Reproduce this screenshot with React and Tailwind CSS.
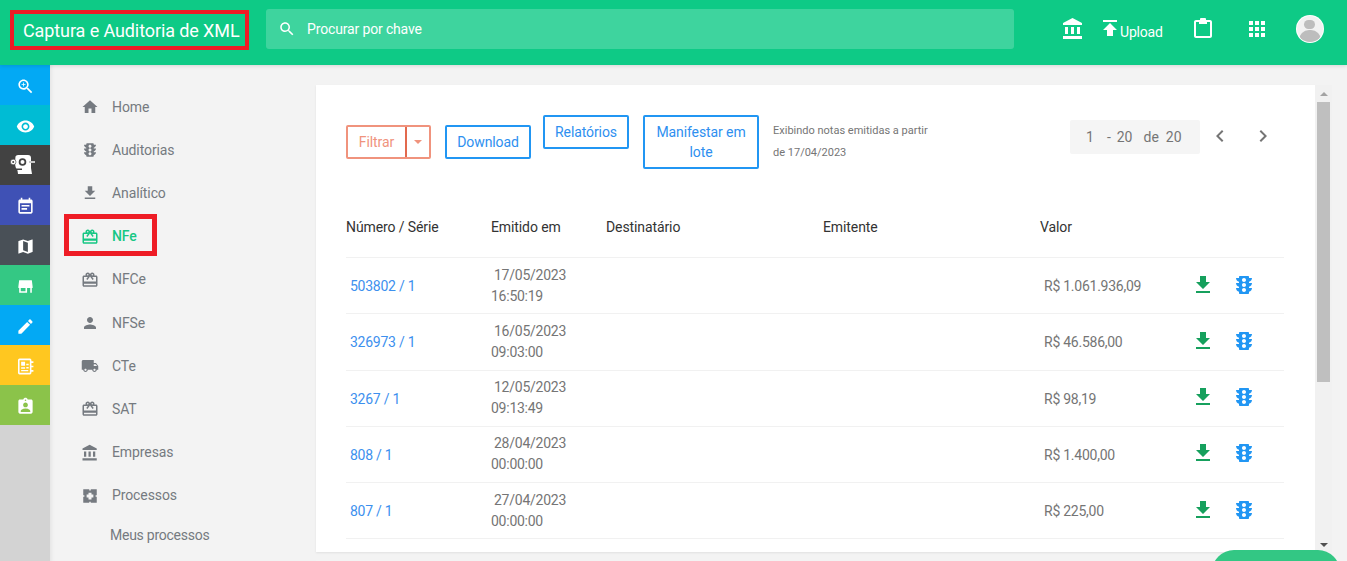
const P = {
  home: "M10 20v-6h4v6h5v-8h3L12 3 2 12h3v8z",
  traffic: "M20 10h-3V8.86c1.72-.45 3-2 3-3.86h-3V4c0-.55-.45-1-1-1H8c-.55 0-1 .45-1 1v1H4c0 1.86 1.28 3.41 3 3.86V10H4c0 1.86 1.28 3.41 3 3.86V15H4c0 1.86 1.28 3.41 3 3.86V20c0 .55.45 1 1 1h8c.55 0 1-.45 1-1v-1.14c1.72-.45 3-2 3-3.86h-3v-1.14c1.72-.45 3-2 3-3.86zm-8 9c-1.11 0-2-.9-2-2s.89-2 2-2c1.1 0 2 .9 2 2s-.89 2-2 2zm0-5c-1.11 0-2-.9-2-2s.89-2 2-2c1.1 0 2 .9 2 2s-.89 2-2 2zm0-5c-1.11 0-2-.9-2-2 0-1.11.89-2 2-2 1.1 0 2 .89 2 2 0 1.1-.89 2-2 2z",
  download: "M19 9h-4V3H9v6H5l7 7 7-7zM5 18v2h14v-2H5z",
  publish: "M5 4v2h14V4H5zm0 10h4v6h6v-6h4l-7-7-7 7z",
  gift: "M20 6h-2.18c.11-.31.18-.65.18-1 0-1.66-1.34-3-3-3-1.05 0-1.96.54-2.5 1.35l-.5.67-.5-.68C10.96 2.54 10.05 2 9 2 7.34 2 6 3.34 6 5c0 .35.07.69.18 1H4c-1.11 0-1.99.89-1.99 2L2 19c0 1.11.89 2 2 2h16c1.11 0 2-.89 2-2V8c0-1.11-.89-2-2-2zm-5-2c.55 0 1 .45 1 1s-.45 1-1 1-1-.45-1-1 .45-1 1-1zM9 4c.55 0 1 .45 1 1s-.45 1-1 1-1-.45-1-1 .45-1 1-1zm11 15H4v-2h16v2zm0-5H4V8h5.08L7 10.83 8.62 12 11 8.76l1-1.36 1 1.36L15.38 12 17 10.83 14.92 8H20v6z",
  person: "M12 12c2.21 0 4-1.79 4-4s-1.79-4-4-4-4 1.79-4 4 1.79 4 4 4zm0 2c-2.67 0-8 1.34-8 4v2h16v-2c0-2.66-5.33-4-8-4z",
  truck: "M20 8h-3V4H3c-1.1 0-2 .9-2 2v11h2c0 1.66 1.34 3 3 3s3-1.34 3-3h6c0 1.66 1.34 3 3 3s3-1.34 3-3h2v-5l-3-4zM6 18.5c-.83 0-1.5-.67-1.5-1.5s.67-1.5 1.5-1.5 1.5.67 1.5 1.5-.67 1.5-1.5 1.5zm13.5-9l1.96 2.5H17V9.5h2.5zm-1.5 9c-.83 0-1.5-.67-1.5-1.5s.67-1.5 1.5-1.5 1.5.67 1.5 1.5-.67 1.5-1.5 1.5z",
  bank: "M4 10v7h3v-7H4zm6 0v7h3v-7h-3zM2 22h19v-3H2v3zm14-12v7h3v-7h-3zm-4.5-9L2 6v2h19V6l-9.5-5z",
  process: "M3 3h8v1.500h2V3h8v8h-1.500v2H21v8h-8v-1.500h-2V21H3v-8h1.500v-2H3zM10 7.500h4V10h2.500v4H14v2.500h-4V14H7.500v-4H10z",
  search: "M15.5 14h-.79l-.28-.27C15.41 12.59 16 11.11 16 9.5 16 5.91 13.09 3 9.5 3S3 5.91 3 9.5 5.91 16 9.5 16c1.61 0 3.09-.59 4.23-1.57l.27.28v.79l5 4.99L20.49 19l-4.99-5zm-6 0C7.01 14 5 11.99 5 9.5S7.01 5 9.5 5 14 7.01 14 9.5 11.99 14 9.5 14z",
  zoom: "M15.5 14h-.79l-.28-.27C15.41 12.59 16 11.11 16 9.5 16 5.91 13.09 3 9.5 3S3 5.91 3 9.5 5.91 16 9.5 16c1.61 0 3.09-.59 4.23-1.57l.27.28v.79l5 4.99L20.49 19l-4.99-5zm-6 0C7.01 14 5 11.99 5 9.5S7.01 5 9.5 5 14 7.01 14 9.5 11.99 14 9.5 14zm2.500-4h-2v2H9v-2H7V9h2V7h1v2h2v1z",
  eye: "M12 4.500C7 4.500 2.730 7.610 1 12c1.730 4.390 6 7.500 11 7.500s9.270-3.110 11-7.500c-1.730-4.390-6-7.500-11-7.500zM12 17c-2.760 0-5-2.240-5-5s2.240-5 5-5 5 2.240 5 5-2.240 5-5 5zm0-8c-1.660 0-3 1.340-3 3s1.340 3 3 3 3-1.340 3-3-1.340-3-3-3z",
  event: "M17 10H7v2h10v-2zm2-7h-1V1h-2v2H8V1H6v2H5c-1.110 0-1.990.9-1.990 2L3 19c0 1.100.89 2 2 2h14c1.100 0 2-.9 2-2V5c0-1.100-.9-2-2-2zm0 16H5V8h14v11zm-5-5H7v2h7v-2z",
  map: "M20.500 3l-.16.03L15 5.100 9 3 3.360 4.900c-.21.07-.36.25-.36.48V20.500c0 .28.22.5.5.5l.16-.03L9 18.900l6 2.100 5.640-1.900c.21-.07.36-.25.36-.48V3.500c0-.28-.22-.5-.5-.5zM15 19l-6-2.110V5l6 2.110V19z",
  store: "M4 4h16l1 8v2h-1v6h-2v-6h-4v6H4v-6H3v-2zM6 14v4h6v-4z",
  edit: "M3 17.250V21h3.750L17.810 9.940l-3.750-3.750L3 17.250zM20.710 7.040c.39-.39.39-1.020 0-1.410l-2.340-2.340c-.39-.39-1.020-.39-1.410 0l-1.830 1.830 3.750 3.750 1.830-1.830z",
  notebook: "M4.500 2h13a2 2 0 0 1 2 2v1.500H22v2h-2.500v3.500H22v2h-2.500V16.500H22v2h-2.500V20a2 2 0 0 1-2 2h-13a2 2 0 0 1-2-2V4a2 2 0 0 1 2-2zm0 2v16h13V4zM6.500 6h5v5h-5zm6.500 2.500h3v2h-3zM6.500 13h5v1.800h-5zm6.500-.500h3v2h-3zM6.500 16.500h9v1.500h-9z",
  badge: "M19 3h-4.180C14.400 1.840 13.300 1 12 1c-1.300 0-2.400.84-2.820 2H5c-1.100 0-2 .9-2 2v14c0 1.100.9 2 2 2h14c1.100 0 2-.9 2-2V5c0-1.100-.9-2-2-2zm-7 0c.55 0 1 .45 1 1s-.45 1-1 1-1-.45-1-1 .45-1 1-1zm0 4c1.660 0 3 1.340 3 3s-1.340 3-3 3-3-1.340-3-3 1.340-3 3-3zm6 12H6v-1.400c0-2 4-3.100 6-3.100s6 1.100 6 3.100V19z",
  clip: "M19 3h-4V2a1 1 0 0 0-1-1h-4a1 1 0 0 0-1 1v1H5c-1.100 0-2 .9-2 2v14c0 1.100.9 2 2 2h14c1.100 0 2-.9 2-2V5c0-1.100-.9-2-2-2zm0 16H5V5h3v2h8V5h3v14z",
  apps: "M4 8h4V4H4v4zm6 12h4v-4h-4v4zm-6 0h4v-4H4v4zm0-6h4v-4H4v4zm6 0h4v-4h-4v4zm6-10v4h4V4h-4zm-6 4h4V4h-4v4zm6 6h4v-4h-4v4zm0 6h4v-4h-4v4z",
  left: "M15.410 7.410L14 6l-6 6 6 6 1.410-1.410L10.830 12z",
  right: "M10 6L8.590 7.410 13.170 12l-4.580 4.590L10 18l6-6z",
};

function Icon({ d, className = "" }) {
  return (
    <svg viewBox="0 0 24 24" fill="currentColor" className={className}>
      <path d={d} fillRule="evenodd" />
    </svg>
  );
}

function Robot() {
  return (
    <svg viewBox="0 0 26 22" className="w-[26px] h-[22px] -ml-[4px]" fill="#fff">
      <path d="M5.500 2.500Q6 1 8 1H18Q21 1 21 4V14L22 20H8L7.500 16.500Q5 14 5 8Z" />
      <rect x="19" y="7" width="6" height="2" fill="#c8c8c8" />
      <circle cx="3.200" cy="8" r="2.800" stroke="#424242" strokeWidth="0.600" />
      <circle cx="3.200" cy="8" r="1" fill="#424242" />
      <circle cx="12.500" cy="8" r="3.800" fill="#424242" />
      <circle cx="12.500" cy="8" r="2" />
      <rect x="6" y="14.500" width="6" height="1.500" fill="#424242" />
    </svg>
  );
}

const rail = [
  { bg: "bg-[#03a9f4]", d: P.zoom },
  { bg: "bg-[#00bcd4]", d: P.eye },
  { bg: "bg-[#424242]", robot: true },
  { bg: "bg-[#3f51b5]", d: P.event },
  { bg: "bg-[#495057]", d: P.map },
  { bg: "bg-[#34c884]", d: P.store },
  { bg: "bg-[#03a9f4]", d: P.edit },
  { bg: "bg-[#ffc720]", d: P.notebook },
  { bg: "bg-[#8bc34a]", d: P.badge },
];

const nav = [
  { label: "Home", d: P.home },
  { label: "Auditorias", d: P.traffic },
  { label: "Analítico", d: P.download },
  { label: "NFe", d: P.gift, active: true },
  { label: "NFCe", d: P.gift },
  { label: "NFSe", d: P.person },
  { label: "CTe", d: P.truck },
  { label: "SAT", d: P.gift },
  { label: "Empresas", d: P.bank },
  { label: "Processos", d: P.process },
];

const rows = [
  ["503802 / 1", "17/05/2023", "16:50:19", "R$ 1.061.936,09"],
  ["326973 / 1", "16/05/2023", "09:03:00", "R$ 46.586,00"],
  ["3267 / 1", "12/05/2023", "09:13:49", "R$ 98,19"],
  ["808 / 1", "28/04/2023", "00:00:00", "R$ 1.400,00"],
  ["807 / 1", "27/04/2023", "00:00:00", "R$ 225,00"],
];

const cols = "grid grid-cols-[145px_115px_217px_217px_1fr]";

function OutlineButton({ children, className = "" }) {
  return (
    <button className={`border-2 border-[#2196f3] rounded-[2px] text-[#2e8ff0] text-[14px] leading-[20px] ${className}`}>
      {children}
    </button>
  );
}

export default function App() {
  return (
    <div className="relative h-screen overflow-hidden flex flex-col bg-[#f3f3f3] font-['Roboto',sans-serif] tracking-[-0.1px]">
      <header className="h-[65px] shrink-0 bg-[#0eca86] flex items-start text-white shadow-[0_1px_4px_rgba(0,0,0,0.12)] z-10">
        <div className="ml-[10px] mt-[10px] w-[239px] h-[40px] border-4 border-[#ee1c25] flex items-center pl-[9px] text-[18px] whitespace-nowrap">
          Captura e Auditoria de XML
        </div>
        <div className="ml-[17px] mt-[9px] w-[748px] h-[40px] rounded-[3px] bg-white/20 flex items-center pl-[12px] text-[14px] tracking-[-0.15px]">
          <Icon d={P.search} className="w-[18px] h-[18px]" />
          <span className="ml-[11px]">Procurar por chave</span>
        </div>
        <Icon d={P.bank} className="w-[24px] h-[24px] ml-[47px] mt-[17px]" />
        <Icon d={P.publish} className="w-[24px] h-[24px] ml-[13px] mt-[16px]" />
        <span className="text-[14px] mt-[22px] leading-[20px] -ml-[2px] tracking-[-0.2px]">Upload</span>
        <Icon d={P.clip} className="w-[24px] h-[24px] ml-[28px] mt-[17px]" />
        <Icon d={P.apps} className="w-[24px] h-[24px] ml-[30px] mt-[17px]" />
        <div className="ml-[27px] mt-[15px] w-[28px] h-[28px] rounded-full bg-white flex items-center justify-center overflow-hidden">
          <div className="w-[26px] h-[26px] rounded-full bg-[#f2f2f2] flex flex-col items-center overflow-hidden">
            <div className="w-[11px] h-[11px] rounded-full bg-[#bdbdbd] mt-[4px]" />
            <div className="w-[22px] h-[14px] rounded-t-[10px] bg-[#bdbdbd] mt-[1px]" />
          </div>
        </div>
      </header>

      <div className="flex-1 flex min-h-0">
        <aside className="w-[50px] shrink-0 bg-[#d3d3d3]">
          {rail.map((r, i) => (
            <div key={i} className={`h-[40px] flex items-center justify-center text-white ${r.bg}`}>
              {r.robot ? <Robot /> : <Icon d={r.d} className="w-[19px] h-[19px] mt-[2px]" />}
            </div>
          ))}
        </aside>

        <nav className="w-[266px] shrink-0 pt-[20.5px] pl-[31px] shadow-[inset_4px_0_4px_-3px_rgba(0,0,0,0.08)] text-[14px] text-[#757a80]">
          {nav.map((n) => (
            <div key={n.label} className={`relative h-[43.2px] flex items-center ${n.active ? "text-[#16c784] font-medium" : ""}`}>
              <Icon d={n.d} className="w-[18px] h-[18px] shrink-0" />
              <span className="ml-[13px]">{n.label}</span>
              {n.active && (
                <div className="absolute left-[-17px] top-[-1.5px] w-[93px] h-[42px] border-[5px] border-[#ee1c25]" />
              )}
            </div>
          ))}
          <div className="pl-[29px] mt-[2px] h-[32px] flex items-center tracking-[-0.25px]">Meus processos</div>
        </nav>

        <main className="flex-1 min-w-0 flex items-start pt-[20px]">
          <section className="w-[999px] h-[467px] bg-white overflow-hidden pl-[30px] pr-[31px] shadow-[0_1px_2px_rgba(0,0,0,0.08)]">
            <div className="flex items-start h-[100px] pt-[30px]">
              <div className="mt-[10px] w-[85px] h-[34px] border-2 border-[#f0937d] rounded-[2px] flex text-[14px] text-[#f0937d]">
                <span className="w-[57px] flex items-center justify-center">Filtrar</span>
                <span className="w-[24px] border-l-2 border-[#e2694e] flex items-center justify-center">
                  <span className="w-0 h-0 border-x-[4px] border-x-transparent border-t-[4px] border-t-[#f0937d]" />
                </span>
              </div>
              <OutlineButton className="ml-[14px] mt-[10px] w-[86px] h-[34px]">Download</OutlineButton>
              <OutlineButton className="ml-[12px] w-[86px] h-[34px]">Relatórios</OutlineButton>
              <OutlineButton className="ml-[14px] w-[116px] h-[54px]">Manifestar em lote</OutlineButton>
              <p className="ml-[14px] w-[160px] text-[11px] leading-[22px] text-[#757575] mt-[5px] tracking-normal">
                Exibindo notas emitidas a partir de 17/04/2023
              </p>
              <div className="ml-[137px] mt-[5px] w-[130px] h-[34px] rounded-[2px] bg-[#f5f5f5] flex items-center pl-[16px] text-[14px] text-[#757575] tracking-normal">
                <span>1</span>
                <span className="ml-[13px]">-</span>
                <span className="ml-[6px]">20</span>
                <span className="ml-[11px]">de</span>
                <span className="ml-[7px]">20</span>
              </div>
              <Icon d={P.left} className="w-[24px] h-[24px] ml-[8px] mt-[9px] text-[#757575]" />
              <Icon d={P.right} className="w-[24px] h-[24px] ml-[19px] mt-[9px] text-[#757575]" />
            </div>

            <div className={`${cols} h-[73px] pt-[32px] text-[14px] leading-[20px] text-[#333] border-b border-[#f1f1f1]`}>
              <span>Número / Série</span>
              <span>Emitido em</span>
              <span>Destinatário</span>
              <span>Emitente</span>
              <span>Valor</span>
            </div>

            {rows.map((r) => (
              <div key={r[0]} className={`${cols} h-[56.25px] items-center text-[14px] text-[#757575] border-b border-[#f1f1f1] tracking-[-0.25px]`}>
                <span className="pl-[4px] mt-[2px] text-[#3d90ee]">{r[0]}</span>
                <div className="leading-[21px]">
                  <div className="pl-[3px]">{r[1]}</div>
                  <div>{r[2]}</div>
                </div>
                <span />
                <span />
                <div className="flex items-center pl-[4px]">
                  <span className="w-[147px] mt-[2px]">{r[3]}</span>
                  <Icon d={P.download} className="w-[24px] h-[24px] mb-[2px] text-[#16a05d]" />
                  <Icon d={P.traffic} className="w-[24px] h-[24px] mb-[2px] ml-[17px] text-[#2196f3]" />
                </div>
              </div>
            ))}
          </section>

          <div className="w-[17px] h-[467px] bg-[#f1f1f1] flex flex-col items-center">
            <span className="mt-[7px] w-0 h-0 border-x-[4px] border-x-transparent border-b-[4px] border-b-[#a3a3a3]" />
            <div className="mt-[6px] w-[13px] h-[280px] bg-[#bfbfbf]" />
            <span className="mt-auto mb-[5px] w-0 h-0 border-x-[4px] border-x-transparent border-t-[4px] border-t-[#505050]" />
          </div>
        </main>
      </div>

      <div className="absolute left-[1212px] top-[550px] w-[128px] h-[44px] rounded-[22px] bg-[#33c784]" />
    </div>
  );
}
